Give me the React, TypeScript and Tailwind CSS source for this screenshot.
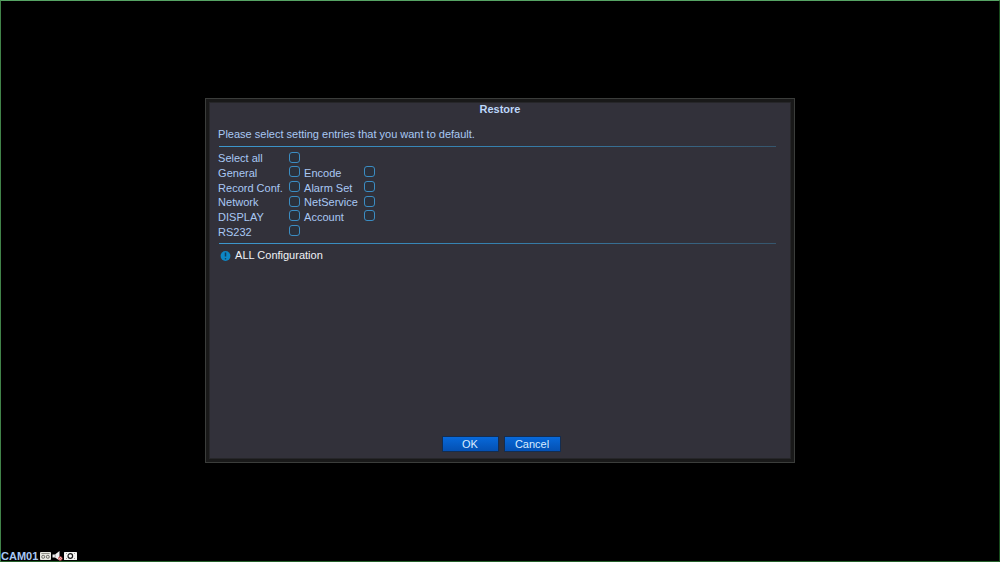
import { useState } from "react";

type Entry = { id: string; label: string };

const rows: Entry[][] = [
  [{ id: "all", label: "Select all" }],
  [{ id: "general", label: "General" }, { id: "encode", label: "Encode" }],
  [{ id: "record", label: "Record Conf." }, { id: "alarm", label: "Alarm Set" }],
  [{ id: "network", label: "Network" }, { id: "netservice", label: "NetService" }],
  [{ id: "display", label: "DISPLAY" }, { id: "account", label: "Account" }],
  [{ id: "rs232", label: "RS232" }],
];

const entryIds = rows.flat().map((entry) => entry.id);

function Divider() {
  return <div className="mx-px h-px bg-linear-to-r from-[#3d97cd] via-[#3580ae] to-[#36566d]" />;
}

function ActionButton({ label }: { label: string }) {
  return (
    <button
      type="button"
      className="h-4 w-[57px] border border-[#142d50] bg-linear-to-b from-[#0869da] to-[#0450b2] text-center text-[11px] leading-[14px] text-[#d9ecff]"
    >
      {label}
    </button>
  );
}

function StatusIcons() {
  return (
    <div className="flex items-center gap-px">
      <svg width="11" height="8" viewBox="0 0 12 8" preserveAspectRatio="none" aria-hidden="true">
        <rect width="12" height="8" rx="1" fill="#e8e8e2" />
        <path d="M1.5 1.5h9" stroke="#77776f" strokeWidth="0.8" />
        <rect x="2" y="3.4" width="3" height="2.8" rx="1" fill="none" stroke="#55554f" strokeWidth="0.9" />
        <rect x="7" y="3.4" width="3" height="2.8" rx="1" fill="none" stroke="#55554f" strokeWidth="0.9" />
      </svg>
      <svg width="11" height="10" viewBox="0 0 11 10" aria-hidden="true">
        <path d="M0.5 3.5h2.5L7.5 0v9.5L3 6.5H0.5z" fill="#f1f1f1" />
        <path d="M3.2 3.4v3" stroke="#777" strokeWidth="0.6" />
        <circle cx="8.3" cy="7.5" r="1.8" fill="#f3d3d3" stroke="#c64848" strokeWidth="0.9" />
        <path d="M7.1 6.3l2.4 2.4" stroke="#b83232" strokeWidth="0.9" />
      </svg>
      <svg width="13" height="8" viewBox="0 0 13 8" aria-hidden="true">
        <rect width="13" height="8" rx="0.5" fill="#f6f6f4" />
        <circle cx="6.3" cy="4" r="2.3" fill="#fff" stroke="#1b1b1b" strokeWidth="1.2" />
        <path d="M2 1.5h1M10 1.5h1M2 6.5h1M10 6.5h1" stroke="#77776f" strokeWidth="0.7" />
      </svg>
    </div>
  );
}

export default function App() {
  const [selected, setSelected] = useState<string[]>([]);

  const toggle = (id: string) => {
    if (id === "all") {
      setSelected(selected.includes("all") ? [] : entryIds);
      return;
    }
    setSelected(
      selected.includes(id)
        ? selected.filter((item) => item !== id && item !== "all")
        : [...selected, id],
    );
  };

  return (
    <div className="flex min-h-screen flex-col border border-t-[#56a464] border-r-[#174a1c] border-b-[#24602a] border-l-[#418349] bg-black font-['Liberation_Sans',Arial,sans-serif] text-[11px] text-[#a9c8f4]">
      <main className="flex flex-1 items-center justify-center pt-[9px]">
        <section
          role="dialog"
          aria-labelledby="restore-title"
          className="w-[calc(59%+1px)] border border-[#3b3d3b] bg-[#191919] p-[3px]"
        >
          <div className="flex min-h-[357px] flex-col border border-[#262629] bg-[#32313a] px-2 pb-1.5">
            <h1 id="restore-title" className="text-center text-[11px] leading-[12px] font-bold text-[#bdd7fa]">
              Restore
            </h1>
            <div className="mr-[5px]">
              <p className="mt-3 mb-[5px] leading-[14px]">
                Please select setting entries that you want to default.
              </p>
              <Divider />
              <div className="my-1 grid h-[88px] grid-rows-6">
                {rows.map((row) => (
                  <div key={row[0].id} className="flex items-center">
                    {row.map((entry, column) => (
                      <div key={entry.id} className="flex items-center">
                        <label
                          htmlFor={entry.id}
                          className={column === 0 ? "w-[71px] leading-[14px]" : "ml-1 w-[60px] leading-[14px]"}
                        >
                          {entry.label}
                        </label>
                        <input
                          id={entry.id}
                          type="checkbox"
                          checked={selected.includes(entry.id)}
                          onChange={() => toggle(entry.id)}
                          className="mb-0.5 size-[11px] appearance-none rounded-[3px] border border-[#3b8cc2] bg-[#2b303b] checked:bg-[#3b8cc2]"
                        />
                      </div>
                    ))}
                  </div>
                ))}
              </div>
              <Divider />
              <div className="mt-1 flex items-center gap-1 pl-0.5 leading-[14px] text-[#f0f1f5]">
                <svg width="11" height="11" viewBox="0 0 11 11" aria-hidden="true">
                  <circle cx="5.5" cy="6" r="4.9" fill="#0d87c5" />
                  <path d="M5.5 2.5v4" stroke="#123f60" strokeWidth="1.5" />
                  <circle cx="5.5" cy="8.7" r="0.8" fill="#123f60" />
                </svg>
                <span>ALL Configuration</span>
              </div>
            </div>
            <div className="mt-auto flex justify-center gap-[5px] pl-0.5">
              <ActionButton label="OK" />
              <ActionButton label="Cancel" />
            </div>
          </div>
        </section>
      </main>
      <footer className="flex h-2.5 items-center gap-0.5 text-[11px] leading-[10px] font-bold">
        <span>CAM01</span>
        <StatusIcons />
      </footer>
    </div>
  );
}
